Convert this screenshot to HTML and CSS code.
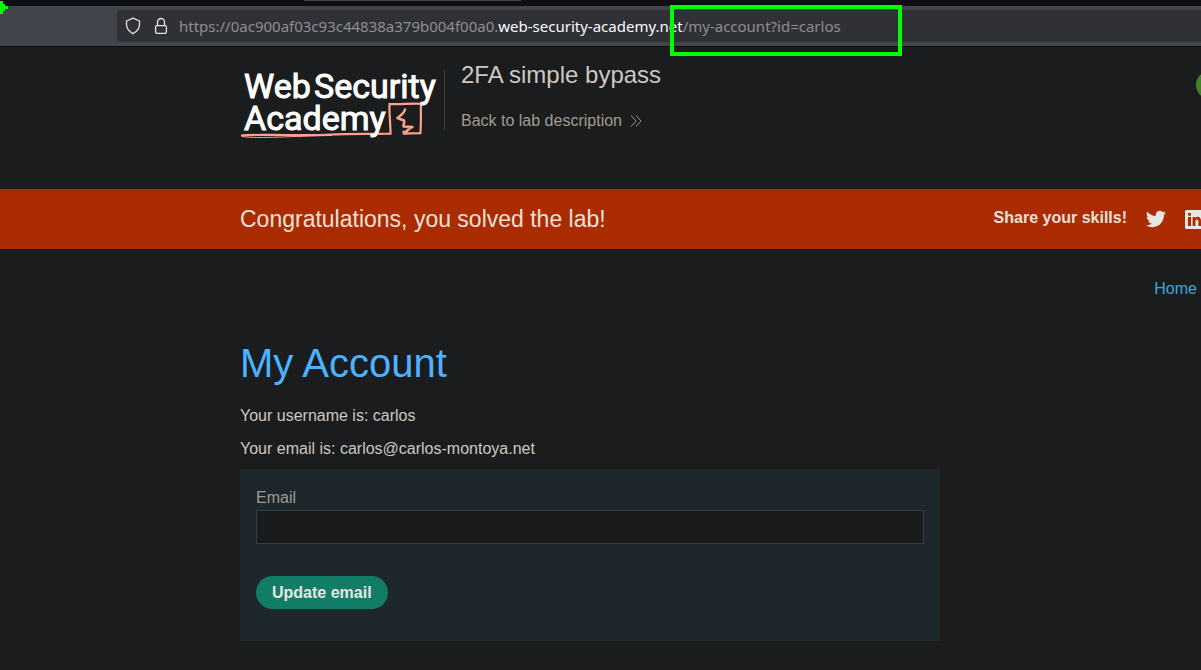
FILE: index.html
```html
<!DOCTYPE html>
<html lang="en">
<head>
<meta charset="utf-8">
<title>2FA simple bypass</title>
<link rel="stylesheet" href="styles.css">
</head>
<body>
<div class="browser">
  <div class="tab-strip"><span class="tab"></span></div>
  <div class="toolbar">
    <div class="address-bar">
      <button class="icon-button" type="button" aria-label="Tracking protection">
        <svg width="16" height="18" viewBox="0 0 16 18"><path d="M8 1.200 14.500 4v3.600c0 4.200-2.600 7-6.500 9-3.900-2-6.500-4.800-6.500-9V4z" fill="none" stroke="#e4e4e6" stroke-width="1.300" stroke-linejoin="round"/></svg>
      </button>
      <button class="icon-button" type="button" aria-label="Connection secure">
        <svg width="14" height="18" viewBox="0 0 14 18"><rect x="1.600" y="8.600" width="10.800" height="7.800" rx="1.400" fill="none" stroke="#e4e4e6" stroke-width="1.300"/><path d="M3.500 8.500V5a3.500 3.500 0 0 1 7 0v3.500" fill="none" stroke="#e4e4e6" stroke-width="1.300"/></svg>
      </button>
      <div class="url">https://0ac900af03c93c44838a379b004f00a0.<span class="domain">web-security-academy.net</span>/my-account?id=carlos</div>
    </div>
  </div>
  <div class="highlight"></div>
  <svg class="marker" width="8" height="14" viewBox="0 0 8 14"><path d="M0 1h3v3h2v2h3v3H5v2H3v3H0z" fill="#00ff00"/></svg>
</div>

<header class="lab-header">
  <svg class="logo" width="204" height="78" viewBox="0 0 204 78" role="img" aria-label="Web Security Academy">
    <path d="M1 72.500C14 71.500 28 72 45 72S75 72.500 90 71.500s40-.5 60.500-.8C150.500 60 149 50 149.500 41c10 .8 20-.8 31.500-.2-.4 10 .3 20-.6 29.300l-16.600.500-.3-3" fill="none" stroke="#ffa18b" stroke-width="2.200"/>
    <path d="M2 73.500C20 76 50 73 92 72.500" fill="none" stroke="#ffa18b" stroke-width="1"/>
    <path d="M165 45.500c.5 4.500-4.500 6.500-7.500 9.500l6.500 2.500c1 2-1 4-.5 6l9 .5c-3 1-6 4-8.500 7" fill="none" stroke="#ffa18b" stroke-width="2.600" stroke-linejoin="round"/>
    <text class="logo-text" x="4" y="35">Web</text>
    <text class="logo-text" x="74" y="35">Security</text>
    <text class="logo-text" x="4" y="67">Academy</text>
  </svg>
  <div class="lab-title">
    <h2>2FA simple bypass</h2>
    <a class="back" href="#">Back to lab description
      <svg width="12" height="12" viewBox="0 0 12 12"><path d="M1 .5 6 6 1 11.500M6 .5 11 6 6 11.500" fill="none" stroke="#9e9689" stroke-width="1"/></svg></a>
  </div>
  <svg class="status" width="5" height="28" viewBox="0 0 5 28"><circle cx="14" cy="14" r="14" fill="#3f8527"/></svg>
</header>

<section class="banner">
  <h4>Congratulations, you solved the lab!</h4>
  <div class="share">
    <span>Share your skills!</span>
    <a href="#" aria-label="Twitter"><svg width="20" height="18" viewBox="0 2 24 20"><path d="M23.950 4.570a10 10 0 0 1-2.820.77 4.960 4.960 0 0 0 2.160-2.720c-.95.55-2 .95-3.130 1.180a4.920 4.920 0 0 0-8.380 4.480C7.690 8.090 4.070 6.130 1.640 3.160a4.920 4.920 0 0 0 1.520 6.570 4.900 4.900 0 0 1-2.230-.61v.06a4.920 4.920 0 0 0 3.950 4.830 5 5 0 0 1-2.210.08 4.940 4.940 0 0 0 4.600 3.420A9.870 9.870 0 0 1 0 19.540a13.990 13.990 0 0 0 7.560 2.210c9.050 0 14-7.500 14-13.980 0-.21 0-.42-.02-.63a9.940 9.940 0 0 0 2.410-2.570z" fill="#e8e6e3"/></svg></a>
    <a href="#" aria-label="LinkedIn"><svg width="16" height="19" viewBox="0 0 16 19"><path fill-rule="evenodd" d="M1.500 0H18v19H1.500A1.500 1.500 0 0 1 0 17.500v-16A1.500 1.500 0 0 1 1.500 0zM3 7v9h3V7zM4.500 2.700a1.600 1.600 0 1 0 0 3.200 1.600 1.600 0 0 0 0-3.200zM7.600 7v9h2.800v-4.500c0-2.800 3-2.800 3 0V16H16V11c0-4.800-4.300-5-5.700-2.700V7z" fill="#e8e6e3"/></svg></a>
  </div>
</section>

<main class="page">
  <nav class="nav"><a href="#">Home</a></nav>
  <h1>My Account</h1>
  <div class="details">
    <p>Your username is: carlos</p>
    <p>Your email is: carlos@carlos-montoya.net</p>
  </div>
  <form class="email-form">
    <label for="email">Email</label>
    <input id="email" type="email">
    <button class="submit" type="button">Update email</button>
  </form>
</main>
</body>
</html>
```
FILE: styles.css
```css
* { box-sizing: border-box; }
body {
  margin: 0;
  background: #1b1c1d;
  color: #cdc8c2;
  font: 16px/20px "Liberation Sans", Arial, sans-serif;
  overflow-x: hidden;
}
h1, h2, h4, p { margin: 0; font-weight: 400; }
a { text-decoration: none; }
svg { display: block; }

.browser { position: relative; }
.tab-strip { height: 6px; background: #0e0f13; padding-left: 304px; }
.tab { display: block; width: 217px; height: 1px; background: #42444c; }
.toolbar {
  background: #42444c;
  padding: 4px 0 4px 117px;
  border-bottom: 1px solid #0e0f13;
}
.address-bar {
  display: flex;
  align-items: center;
  height: 32px;
  padding-left: 8px;
  background: #303136;
  border-radius: 4px 0 0 4px;
}
.icon-button { border: 0; padding: 0; margin-right: 13px; background: none; }
.icon-button + .icon-button { margin-right: 11px; }
.url {
  font: 15px/20px "Noto Sans", sans-serif;
  color: #8e8e90;
  white-space: nowrap;
}
.domain { color: #fbfbfe; }
.highlight {
  position: absolute;
  left: 670px;
  top: 5px;
  width: 232px;
  height: 51px;
  border: 4px solid #00ff00;
}
.marker { position: absolute; left: 0; top: 0; }

.lab-header {
  display: flex;
  align-items: flex-start;
  padding: 16px 0 0 240px;
  height: 142px;
}
.logo-text {
  font: 400 34px Roboto, sans-serif;
  fill: #fff;
  stroke: #fff;
  stroke-width: 1px;
}
.lab-title { position: relative; padding-left: 17px; }
.lab-title::before {
  content: "";
  position: absolute;
  left: 0;
  top: 6px;
  height: 62px;
  border-left: 1px solid #3a3d3f;
}
.lab-title h2 { font-size: 24px; line-height: 24px; }
.back { display: flex; align-items: center; gap: 8px; margin-top: 24px; color: #a39b8f; }
.status { margin: 8px 0 0 auto; }

.banner {
  display: flex;
  justify-content: space-between;
  align-items: center;
  height: 60px;
  padding-left: 240px;
  background: #ab2b00;
  color: #e8e0dc;
}
.banner h4 { font-size: 23px; line-height: 28px; }
.share { display: flex; align-items: center; gap: 19px; font-weight: 700; }
.share span { padding-bottom: 2px; }

.page { padding: 30px 0 29px 240px; }
.nav { display: flex; justify-content: flex-end; padding-right: 4px; }
.nav a { color: #3ea6db; }
h1 { margin-top: 40px; font-size: 40px; line-height: 48px; color: #4db2ff; }
.details { display: grid; gap: 13px; margin: 19px 0 10px; }
.email-form {
  display: flex;
  flex-direction: column;
  align-items: flex-start;
  max-width: 700px;
  padding: 19px 16px 32px;
  background: #1d272c;
}
.email-form label { color: #a39b8f; }
.email-form input {
  width: 100%;
  height: 34px;
  margin: 2px 0 32px;
  padding: 4px 8px;
  border: 1px solid #393d3f;
  background: #1a1b1c;
  color: #cdc8c2;
  font: inherit;
}
.submit {
  border: 0;
  border-radius: 17px;
  height: 33px;
  padding: 0 16px;
  background: #127d66;
  color: #e8e6e3;
  font: 700 16px/20px "Liberation Sans", Arial, sans-serif;
}
```
